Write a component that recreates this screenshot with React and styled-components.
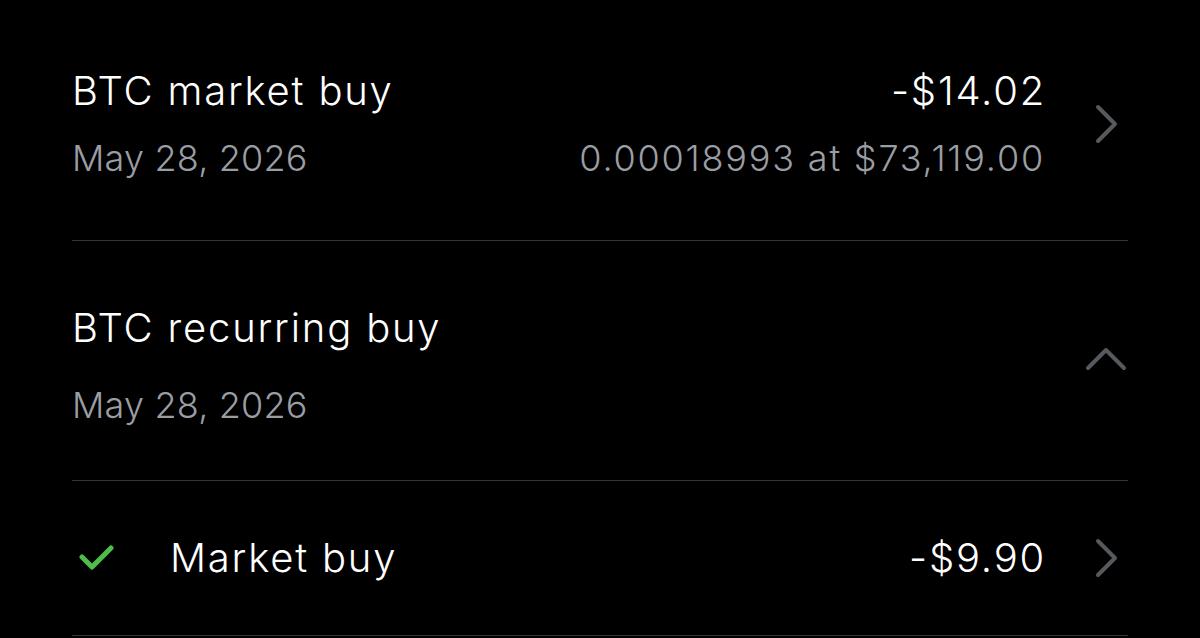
import React from 'react';
import styled, { createGlobalStyle } from 'styled-components';

const GlobalStyle = createGlobalStyle`
  html, body {
    margin: 0;
    padding: 0;
    background: #000;
  }
  body {
    font-family: Inter, 'Liberation Sans', sans-serif;
    -webkit-font-smoothing: antialiased;
  }
`;

const Screen = styled.div`
  width: 1200px;
  height: 638px;
  overflow: hidden;
  background: #000;
  padding: 0 72px;
  box-sizing: border-box;
`;

const Row = styled.div`
  display: flex;
  align-items: center;
  gap: 41px;
  padding: ${(p) => p.$pad};
  border-bottom: 1px solid #333538;
`;

const Main = styled.div`
  flex: 1;
  display: flex;
  flex-direction: column;
  gap: ${(p) => p.$gap || 13}px;
`;

const Line = styled.div`
  display: flex;
  justify-content: space-between;
  align-items: center;
`;

const Title = styled.span`
  flex: ${(p) => (p.$grow ? 1 : 'none')};
  color: #fff;
  font-size: 40px;
  font-weight: 340;
  line-height: 56px;
  letter-spacing: 0.045em;
`;

const Amount = styled(Title)`
  margin-right: -3px;
`;

const Sub = styled.span`
  color: #9a9ea4;
  font-size: 36px;
  font-weight: 340;
  line-height: 52px;
  letter-spacing: ${(p) => p.$track || '0.005em'};
  margin-right: ${(p) => (p.$track ? '-2px' : 0)};
`;

const CheckSlot = styled.div`
  width: 98px;
  display: flex;
  align-items: center;
  padding-left: 7px;
  box-sizing: border-box;
`;

const IconSlot = styled.div`
  width: 44px;
  margin-bottom: ${(p) => p.$lift || 0}px;
  display: flex;
  justify-content: center;
  align-items: center;
  color: #56595d;
`;

const ChevronRight = () => (
  <svg width="25" height="40" viewBox="0 0 25 40" fill="none">
    <path d="M4 3 L21 20 L4 37" stroke="currentColor" strokeWidth="4" strokeLinecap="round" strokeLinejoin="round" />
  </svg>
);

const ChevronUp = () => (
  <svg width="42" height="28" viewBox="0 0 42 28" fill="none">
    <path d="M3 24 L21 6 L39 24" stroke="currentColor" strokeWidth="4" strokeLinecap="round" strokeLinejoin="round" />
  </svg>
);

const Check = () => (
  <svg width="36" height="28" viewBox="0 0 36 28" fill="none">
    <path d="M3 13 L13 23 L32 4" stroke="#4cbf4a" strokeWidth="5" strokeLinecap="round" strokeLinejoin="round" />
  </svg>
);

export default function App() {
  return (
    <>
      <GlobalStyle />
      <Screen>
        <Row $pad="63px 0 56px">
          <Main>
            <Line>
              <Title>BTC market buy</Title>
              <Amount>-$14.02</Amount>
            </Line>
            <Line>
              <Sub>May 28, 2026</Sub>
              <Sub $track="0.05em">0.00018993 at $73,119.00</Sub>
            </Line>
          </Main>
          <IconSlot>
            <ChevronRight />
          </IconSlot>
        </Row>
        <Row $pad="59px 0 49px">
          <Main $gap={23}>
            <Line>
              <Title>BTC recurring buy</Title>
            </Line>
            <Line>
              <Sub>May 28, 2026</Sub>
            </Line>
          </Main>
          <IconSlot $lift={16}>
            <ChevronUp />
          </IconSlot>
        </Row>
        <Row $pad="49px 0">
          <Main>
            <Line>
              <CheckSlot>
                <Check />
              </CheckSlot>
              <Title $grow>Market buy</Title>
              <Amount>-$9.90</Amount>
            </Line>
          </Main>
          <IconSlot>
            <ChevronRight />
          </IconSlot>
        </Row>
      </Screen>
    </>
  );
}
